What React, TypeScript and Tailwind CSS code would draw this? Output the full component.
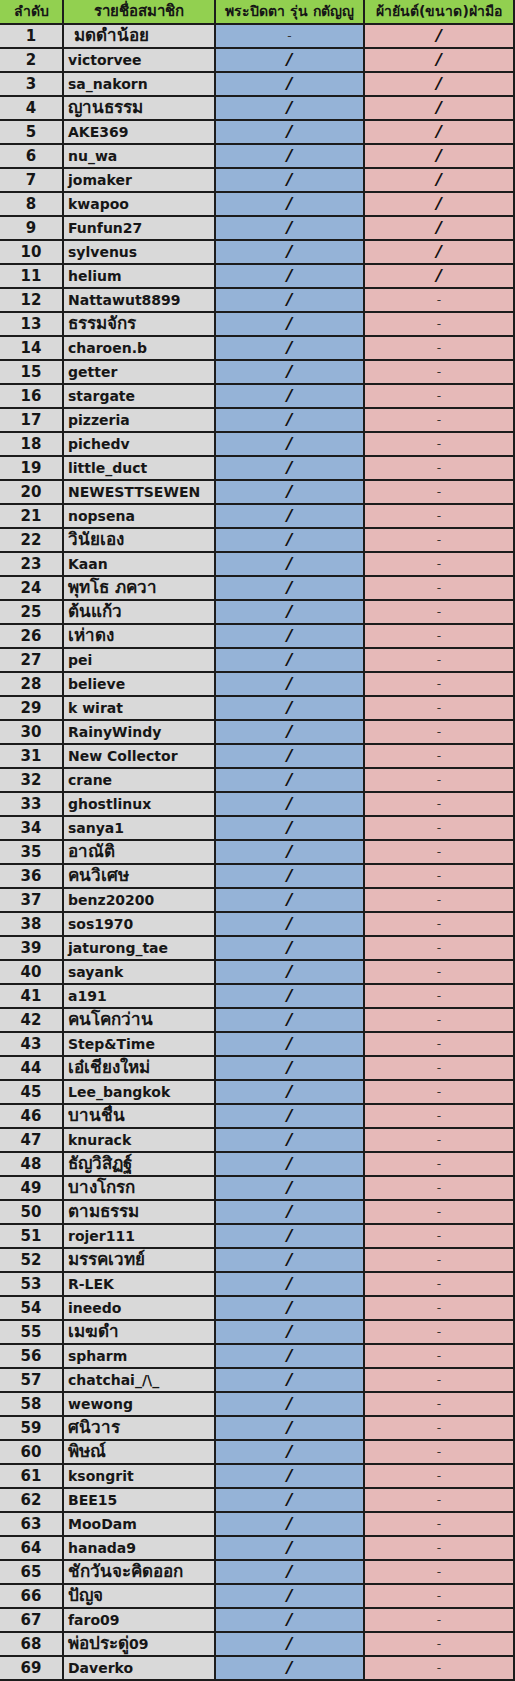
import React from 'react';

const names: string[] = [
  ' มดดำน้อย', 'victorvee', 'sa_nakorn', 'ญานธรรม', 'AKE369', 'nu_wa', 'jomaker', 'kwapoo', 'Funfun27', 'sylvenus',
  'helium', 'Nattawut8899', 'ธรรมจักร', 'charoen.b', 'getter', 'stargate', 'pizzeria', 'pichedv', 'little_duct', 'NEWESTTSEWEN',
  'nopsena', 'วินัยเอง', 'Kaan', 'พุทโธ ภควา', 'ต้นแก้ว', 'เห่าดง', 'pei', 'believe', 'k wirat', 'RainyWindy',
  'New Collector', 'crane', 'ghostlinux', 'sanya1', 'อาณัติ', 'คนวิเศษ', 'benz20200', 'sos1970', 'jaturong_tae', 'sayank',
  'a191', 'คนโคกว่าน', 'Step&Time', 'เอ๋เชียงใหม่', 'Lee_bangkok', 'บานชื่น', 'knurack', 'ธัญวิสิฏฐ์', 'บางโกรก', 'ตามธรรม',
  'rojer111', 'มรรคเวทย์', 'R-LEK', 'ineedo', 'เมฆดำ', 'spharm', 'chatchai_/\\_', 'wewong', 'ศนิวาร', 'พิษณ์',
  'ksongrit', 'BEE15', 'MooDam', 'hanada9', 'ชักวันจะคิดออก', 'ปัญจ', 'faro09', 'พ่อประดู่09', 'Daverko',
];

// thai glyphs from the fallback font come out small, so thai runs get a bigger size
const Name: React.FC<{ text: string }> = ({ text }) => (
  <>
    {text.split(/([\u0E00-\u0E7F ]+)/).filter(Boolean).map((part, k) =>
      /[\u0E00-\u0E7F]/.test(part) ? (
        <span key={k} className="text-[17px]">{part}</span>
      ) : (
        <span key={k}>{part}</span>
      )
    )}
  </>
);

const cell = 'border-r-2 border-b-2 border-[#1c1c1c] flex items-center';

const Mark: React.FC<{ on: boolean }> = ({ on }) =>
  on ? (
    <span className="text-[16px] font-bold italic text-[#111]">/</span>
  ) : (
    <span className="text-[12px] text-[#333]">-</span>
  );

const App: React.FC = () => {
  return (
    <div
      className="w-[515px] bg-white text-[#161616]"
      style={{ fontFamily: '"DejaVu Sans", Tahoma, "Noto Sans", sans-serif' }}
    >
      <div className="grid grid-cols-[64px_152px_149px_150px]">
        {/* header */}
        <div className={`${cell} h-[25px] justify-center bg-[#92d050] text-[14px] font-bold`}>ลำดับ</div>
        <div className={`${cell} h-[25px] justify-center bg-[#92d050] text-[15px] font-bold`}>รายชื่อสมาชิก</div>
        <div className={`${cell} h-[25px] justify-center bg-[#92d050] text-[14px] font-bold whitespace-nowrap`}>พระปิดตา รุ่น กตัญญู</div>
        <div className={`${cell} h-[25px] justify-center bg-[#92d050] text-[14px] font-bold whitespace-nowrap`}>ผ้ายันต์(ขนาด)ฝ่ามือ</div>

        {names.map((name, i) => (
          <React.Fragment key={i}>
            <div className={`${cell} h-6 justify-center bg-[#d9d9d9] text-[15px] font-bold`}>{i + 1}</div>
            <div className={`${cell} h-6 bg-[#d9d9d9] pl-[4px] text-[14px] font-bold whitespace-pre overflow-hidden`}>
              <Name text={name} />
            </div>
            <div className={`${cell} h-6 justify-center bg-[#95b3d7]`}>
              <Mark on={i !== 0} />
            </div>
            <div className={`${cell} h-6 justify-center bg-[#e6b9b8]`}>
              <Mark on={i < 11} />
            </div>
          </React.Fragment>
        ))}
      </div>
    </div>
  );
};

export default App;
